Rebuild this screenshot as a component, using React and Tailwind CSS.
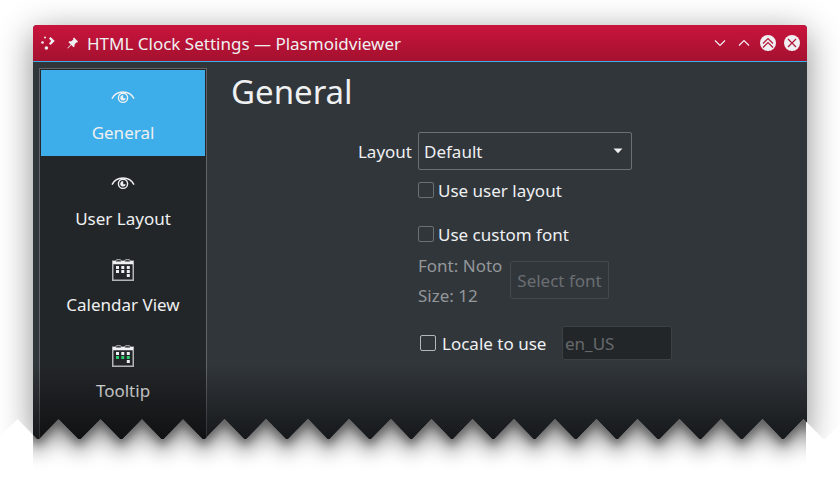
import React from "react";

const NOTCHES = [-24.5, 17.5, 58.5, 100.5, 142, 183, 224.5, 266, 308, 349, 391, 431.5, 472.5, 514, 555, 596.5, 637.5, 679.5, 721, 762.5, 803.5, 845];
const TEAR = NOTCHES.flatMap((x, i) => {
  const next = NOTCHES[i + 1];
  return next === undefined ? [[x, 419]] : [[x, 419], [(x + next) / 2 - 1, 439], [(x + next) / 2 + 1, 439]];
});
const tearClip = `polygon(-30px 0px, ${TEAR.map(([x, y]) => `${x}px ${y}px`).join(", ")}, 845px 0px)`;
const tearPoints = `-25,200 ${TEAR.map((p) => p.join(",")).join(" ")} 845,200`;

function Eye() {
  return (
    <svg width="24" height="14" viewBox="0 0 24 14" fill="none" stroke="#eff0f1">
      <path d="M1 7.600C5.500-1.200 18.500-1.200 23 7.600" strokeWidth="1.500" />
      <circle cx="12" cy="6.800" r="4.600" strokeWidth="1.400" />
      <path d="M12.200 4A2.800 2.800 0 1 0 14.800 7.200H12.200Z" fill="#eff0f1" stroke="none" />
    </svg>
  );
}

function Calendar({ accent }) {
  return (
    <svg width="22" height="22" viewBox="0 0 22 22">
      <path d="M0 1.500H22V22H0ZM1.500 5V20.500H20.500V5Z" fill="#b3b4b5" fillRule="evenodd" />
      <path d="M1 2H21V5.300H1Z" fill="#eff0f1" />
      <path d="M3.800 2.500Q4.300 .6 6.500 .6T9.200 2.500ZM12.800 2.500Q13.300 .6 15.500 .6T18.200 2.500Z" fill="#232629" />
      <path d="M3.500 1.800Q4 .6 6.500 .6T9.500 1.800M12.500 1.800Q13 .6 15.500 .6T18.500 1.800" fill="none" stroke="#c5c6c7" />
      <path d="M4 7h3v3H4zM9.300 7h3v3h-3zM14.800 7h3v3h-3zM14.800 15h3v3h-3z" fill="#eff0f1" />
      <path d="M4 11h3v3H4zM9.300 11h3v3h-3zM14.800 11h3v3h-3z" fill={accent || "#eff0f1"} />
    </svg>
  );
}

function NavItem({ label, icon, active }) {
  return (
    <div className={`flex h-[86px] flex-col items-center ${active ? "bg-[#3daee9]" : ""}`}>
      <div className="flex h-[51px] items-center pt-[5px]">{icon}</div>
      <div className="text-[17px] leading-6 whitespace-nowrap">{label}</div>
    </div>
  );
}

function Check({ label, bright }) {
  return (
    <div className="flex h-6 items-center">
      <span className={`size-4 rounded-[2px] border ${bright ? "border-[#b4b6b8]" : "border-[#6c7073]"}`} />
      <span className={`pt-0.5 leading-6 whitespace-nowrap ${bright ? "ml-1.5" : "ml-1"}`}>{label}</span>
    </div>
  );
}

function TitleBar() {
  return (
    <div className="flex h-9 items-center bg-linear-to-b from-[#c9143d] to-[#a5112f] pr-[7px] pl-2">
      <svg width="14" height="16" viewBox="0 0 14 16" fill="#eff0f1">
        <path d="M8 3.600L9.600 2L13.700 6L9.600 10L8 8.400L10.200 6Z" />
        <circle cx="4" cy="2.500" r="1" /><circle cx="1.500" cy="7.500" r="1.300" /><circle cx="5.400" cy="13" r="1.800" />
      </svg>
      <svg className="ml-3" width="12" height="12" viewBox="0 0 12 12" fill="#eff0f1">
        <path d="M7 .5L11 4.500L10.200 5.600L9.300 5.600L7.600 7.500L7.500 9.500L6.500 10.200L4.400 8L.8 11.500L.3 11L3.800 7.500L1.500 5.300L2.300 4.200L4.300 4.300L6.300 2.400L6 1.500Z" />
      </svg>
      <span className="ml-2 pt-0.5 text-[17px] leading-6 whitespace-nowrap">HTML Clock Settings — Plasmoidviewer</span>
      <div className="ml-auto flex gap-2">
        <svg width="16" height="16" viewBox="0 0 16 16" fill="none" stroke="#eff0f1" strokeWidth="1.200"><path d="M3 5.500L8 10.500L13 5.500" /></svg>
        <svg width="16" height="16" viewBox="0 0 16 16" fill="none" stroke="#eff0f1" strokeWidth="1.200"><path d="M3 10.500L8 5.500L13 10.500" /></svg>
        <svg width="16" height="16" viewBox="0 0 16 16" fill="none" stroke="#b51537" strokeWidth="1.200"><circle cx="8" cy="8" r="8" fill="#eff0f1" stroke="none" /><path d="M3 8.500L8 3.500L13 8.500M3 12.500L8 7.500L13 12.500" /></svg>
        <svg width="16" height="16" viewBox="0 0 16 16" fill="none" stroke="#b51537" strokeWidth="1.200"><circle cx="8" cy="8" r="8" fill="#eff0f1" stroke="none" /><path d="M4 4L12 12M12 4L4 12" /></svg>
      </div>
    </div>
  );
}

export default function App() {
  return (
    <div className="relative h-[478px] w-[840px] overflow-hidden bg-white font-['Noto_Sans',sans-serif] text-[17px] text-[#eff0f1]">
      <svg className="absolute top-0 left-[33px]" width="773" height="478" viewBox="33 0 773 478">
        <defs>
          <filter id="soft" x="-10%" y="-10%" width="120%" height="140%"><feGaussianBlur stdDeviation="10" /></filter>
          <filter id="edge" x="-10%" y="-10%" width="120%" height="140%"><feGaussianBlur stdDeviation="4" /></filter>
        </defs>
        <polygon points={tearPoints} transform="translate(0 14)" fill="#000" opacity=".42" filter="url(#soft)" />
        <polygon points={tearPoints} transform="translate(0 6)" fill="#000" opacity=".34" filter="url(#edge)" />
      </svg>
      <div className="relative h-[478px] bg-white pt-[25px] pl-[33px]" style={{ clipPath: tearClip }}>
        <div className="relative h-[410px] w-[774px] rounded-t-[4px] shadow-[0_8px_34px_rgba(0,0,0,0.46)]">
          <div className="h-[453px] overflow-hidden rounded-t-[4px] bg-[#31363b]">
            <TitleBar />
            <div className="h-px bg-[#3daee9]" />
            <div className="flex h-[416px] pt-1.5 pl-1.5">
              <nav className="h-[410px] w-[168px] shrink-0 border border-[#616569] bg-[#232629] pt-px pr-px pl-px">
                <NavItem label="General" icon={<Eye />} active />
                <NavItem label="User Layout" icon={<Eye />} />
                <NavItem label="Calendar View" icon={<Calendar />} />
                <NavItem label="Tooltip" icon={<Calendar accent="#2ecc71" />} />
              </nav>
              <main className="pl-6">
                <h1 className="pt-px text-[33px] leading-[46px]">General</h1>
                <div className="mt-[17px] flex items-center">
                  <span className="w-[187px] pt-0.5 pr-1.5 text-right">Layout</span>
                  <div className="flex h-[38px] w-[214px] items-center justify-between rounded-[2px] border border-[#6c7073] pr-2 pl-[5px]">
                    <span className="pt-0.5">Default</span>
                    <svg width="10" height="6" viewBox="0 0 10 6"><path d="M.5 .5H9.500L5 5.300Z" fill="#eff0f1" /></svg>
                  </div>
                </div>
                <div className="pl-[187px]">
                  <div className="mt-2"><Check label="Use user layout" /></div>
                  <div className="mt-5"><Check label="Use custom font" /></div>
                  <div className="mt-[5px] flex text-[#94979a]">
                    <div className="w-[92px] whitespace-nowrap">
                      <div className="leading-[30px]">Font: Noto</div>
                      <div className="leading-[30px]">Size: 12</div>
                    </div>
                    <div className="mt-2.5 flex h-[38px] w-[99px] items-center justify-center rounded-[2px] border border-[#45494d] pt-0.5 whitespace-nowrap text-[#6a6e71]">Select font</div>
                  </div>
                  <div className="mt-[15px] flex items-center pl-0.5">
                    <div className="w-[142px]"><Check label="Locale to use" bright /></div>
                    <div className="flex h-[34px] w-[110px] items-center rounded-[2px] border border-[#3d4144] bg-[#232629] pt-0.5 pl-0.5 text-[#65696c]">en_US</div>
                  </div>
                </div>
              </main>
            </div>
          </div>
          <div className="absolute inset-x-0 top-[340px] h-[76px] bg-linear-to-b from-transparent to-black/56" />
        </div>
      </div>
    </div>
  );
}
